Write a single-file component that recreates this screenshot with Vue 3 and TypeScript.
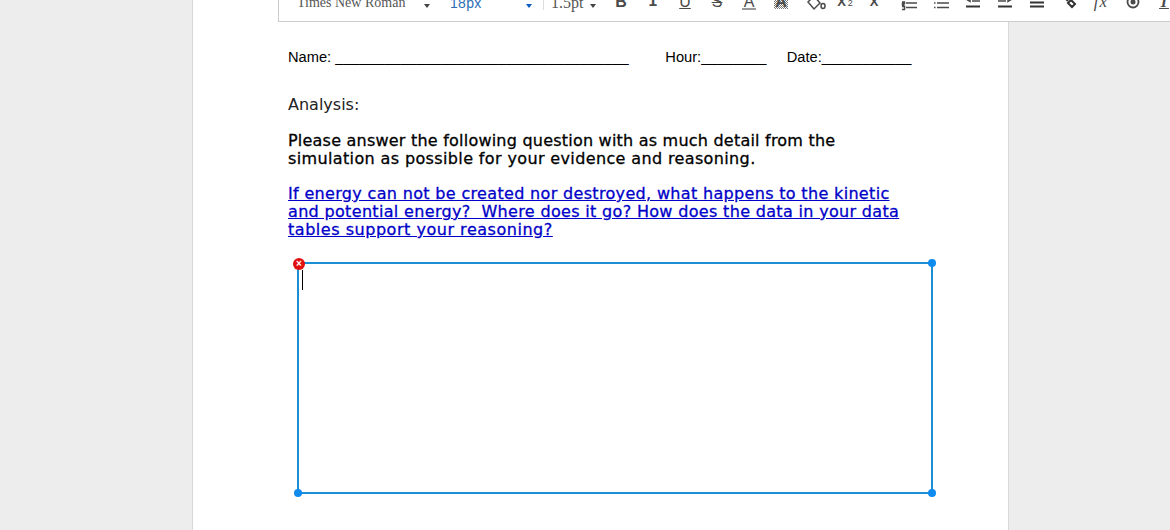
<script setup lang="ts">
interface ToolIcon {
  label?: string
  cls?: string
  sub?: string
  lines?: string
  thick?: string
  ring?: boolean
}

const tools: ToolIcon[] = [
  { label: 'B', cls: 'bold' },
  { label: 'I', cls: 'slab' },
  { label: 'U', cls: 'under' },
  { label: 'S', cls: 'strike' },
  { label: 'A', cls: 'color' },
  { label: 'A', cls: 'back' },
  { lines: 'M3 8L9 2L15 9L9 15ZM20 12a2 2.500 0 1 0 -4 0a2 2.500 0 1 0 4 0' },
  { label: 'X', cls: 'bold small-x shift-sub', sub: '2' },
  { label: 'X', cls: 'bold small-x shift-clear' },
  { lines: 'M5 4.500h11M5 9h11M5 13.500h11M1.500 3v3M1 8h2.500v1.500H1.500V11h2M1 12.500h2.500v3H1' },
  { lines: 'M4 4.500h12M4 9h12M4 13.500h12M1 4.500h1.500M1 9h1.500M1 13.500h1.500' },
  { lines: 'M7 2.500h8M7 7h8M5 2.500l-4 2.500l4 2.500z', thick: 'M1 12.500h14' },
  { lines: 'M1 2.500h8M1 7h8M11 2.500l4 2.500l-4 2.500z', thick: 'M1 12.500h14' },
  { lines: 'M1 4.500h14', thick: 'M1 8.500h14M1 12.500h14' },
  { thick: 'M1 1l6 6M7 9l3-3 4 4-3 3z' },
  { label: 'fx', cls: 'formula' },
  { ring: true },
  { label: 'T', cls: 'clear', sub: 'x' },
]
</script>

<template>
  <div class="page">
    <main class="sheet">
      <div class="toolbar">
        <div class="select font-name"><span>Times New Roman</span><i class="caret"></i></div>
        <div class="select font-size"><span>18px</span><i class="caret blue"></i></div>
        <div class="sep"></div>
        <div class="select spacing"><span>1.5pt</span><i class="caret"></i></div>
        <div class="buttons">
          <div v-for="(tool, i) in tools" :key="i" class="btn">
            <span v-if="tool.label" class="glyph" :class="tool.cls">{{ tool.label }}<small v-if="tool.sub">{{ tool.sub }}</small></span>
            <svg v-else width="16" height="16" viewBox="0 0 16 16" class="icon">
              <path v-if="tool.lines" :d="tool.lines" />
              <path v-if="tool.thick" :d="tool.thick" class="thick" />
              <template v-if="tool.ring">
                <circle cx="8" cy="8" r="5.500" class="thick-ring" />
                <circle cx="8" cy="8" r="2.500" class="dot" />
              </template>
            </svg>
          </div>
        </div>
      </div>
      <div class="content">
        <p class="name-line">Name: ____________________________________ &nbsp; &nbsp; &nbsp; &nbsp; Hour:________ &nbsp; &nbsp; Date:___________</p>
        <p class="heading">Analysis:</p>
        <p class="prompt">Please answer the following question with as much detail from the<br><span class="wide-a">simulation as possible for your evidence and reasoning.</span></p>
        <p class="question">If energy can not be created nor destroyed, what happens to the kinetic<br>and potential energy?&nbsp; Where does it go? How does the data in your data<br><span class="wide-b">tables support your reasoning?</span></p>
        <div class="answer">
          <span class="close"></span>
          <span class="handle tr"></span>
          <span class="handle bl"></span>
          <span class="handle br"></span>
          <span class="cursor"></span>
        </div>
      </div>
    </main>
  </div>
</template>

<style>
html, body { margin: 0; padding: 0; background: #ededed; overflow: hidden; }
</style>

<style scoped>
.page { width: 1170px; height: 530px; background: #ededed; overflow: hidden; }
.sheet {
  position: relative;
  box-sizing: border-box;
  width: 817px;
  height: 530px;
  margin-left: 192px;
  background: #fff;
  border-left: 1px solid #d8d8d8;
  border-right: 1px solid #d8d8d8;
}
.toolbar {
  position: absolute;
  left: 85px;
  top: -11px;
  width: 930px;
  height: 33px;
  box-sizing: border-box;
  display: flex;
  padding: 5px 0 0 18px;
  background: #fff;
  border-left: 1px solid #ccc;
  border-bottom: 1px solid #ccc;
  color: #555;
}
.select {
  display: flex;
  justify-content: space-between;
  height: 18px;
  line-height: 18px;
  white-space: nowrap;
  font-family: "Liberation Serif", serif;
  font-size: 14px;
}
.font-name { width: 133px; margin-right: 20px; }
.font-size { width: 82px; margin-right: 11px; color: #2a6fb5; font-family: "Liberation Sans", sans-serif; letter-spacing: .3px; }
.sep { width: 1px; height: 16px; margin-right: 7px; background: #ddd; }
.spacing { width: 45px; margin-right: 9px; font-size: 16px; }
.caret {
  width: 0; height: 0;
  margin-top: 10px;
  border: 3.500px solid transparent; border-top: 4px solid #444; border-bottom: 0;
}
.caret.blue { border-top-color: #0a5dc2; }
.buttons { display: flex; }
.btn {
  width: 32px;
  height: 16px;
  display: flex;
  justify-content: center;
  align-items: flex-start;
}
.glyph {
  display: block;
  font: 16px/16px "Liberation Sans", sans-serif;
  color: #4a4a4a;
  white-space: nowrap;
}
.bold { font-weight: 700; }
.slab { font-family: "Liberation Mono", monospace; font-weight: 700; }
.under { text-decoration: underline; }
.strike { text-decoration: line-through; }
.color { width: 14px; text-align: center; height: 14px; border-bottom: 2px solid #999; line-height: 15px; }
.back {
  width: 14px; text-align: center; height: 15px;
  font-weight: 700;
  background: repeating-conic-gradient(#777 0 25%, #fff 0 50%) 0 0 / 2px 2px;
}
.small-x { font-size: 13px; }
.shift-sub { margin-left: 0; }
.shift-clear { margin-right: 6px; }
small { font-size: 9px; font-weight: 400; margin-left: 2px; }
.formula { font: italic 17px/15px "Liberation Serif", serif; letter-spacing: 1px; }
.clear { font: italic 700 16px/15px "Liberation Serif", serif; text-decoration: underline; margin-left: 4px; }
.icon {
  overflow: visible;
  fill: none;
  stroke: #4a4a4a;
  stroke-width: 1.500;
}
.thick { stroke-width: 2; stroke: #333; }
.thick-ring { stroke-width: 1.800; }
.dot { fill: #4a4a4a; stroke: none; }

.content { box-sizing: border-box; padding: 48px 0 0 95px; }
p { margin: 0; white-space: nowrap; }
.name-line { font: 14.670px/18px "Liberation Sans", sans-serif; color: #000; }
.heading, .prompt, .question {
  font-family: "DejaVu Sans", sans-serif;
  font-size: 16px;
  line-height: 18px;
}
.heading { margin-top: 30px; color: #222; font-weight: 400; }
.prompt { margin-top: 18px; color: #000; -webkit-text-stroke: .3px #000; letter-spacing: .22px; }
.question { margin-top: 17px; color: #0000c8; text-decoration: underline; -webkit-text-stroke: .3px #0000c8; letter-spacing: .33px; }
.wide-a { letter-spacing: .37px; }
.wide-b { letter-spacing: .53px; }
.answer {
  position: relative;
  box-sizing: border-box;
  width: 636px;
  height: 232px;
  margin: 23px 0 0 9px;
  border: 2px solid #1a8fd6;
}
.handle, .close { position: absolute; border-radius: 50%; }
.handle { width: 8px; height: 8px; background: #0d8bee; }
.tr { right: -5px; top: -5px; }
.bl { left: -5px; bottom: -5px; }
.br { right: -5px; bottom: -5px; }
.close { left: -6px; top: -6px; width: 12px; height: 12px; background: #e01010; }
.close::after {
  content: "×"; position: absolute; inset: 0;
  font: bold 10px/12px "Liberation Sans", sans-serif; color: #fff; text-align: center;
}
.cursor { position: absolute; left: 3px; top: 6px; width: 1px; height: 20px; background: #000; }
</style>
